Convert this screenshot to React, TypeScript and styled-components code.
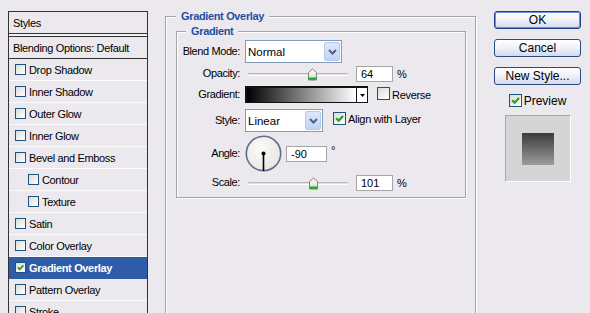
import * as React from 'react';
import styled, { createGlobalStyle } from 'styled-components';

const GlobalStyle = createGlobalStyle`
    html, body {
        margin: 0;
        padding: 0;
        background: #ebe9ee;
    }
    body {
        font-family: 'Liberation Sans', Arial, sans-serif;
        font-size: 11px;
        color: #000;
    }
`;

const Frame = styled.div`
    display: flex;
    align-items: flex-start;
    width: 590px;
    height: 313px;
    overflow: hidden;
    background: #ebe9ee;
`;

/* ---------- left styles list ---------- */

const StylesPanel = styled.div`
    flex-shrink: 0;
    width: 140px;
    height: 330px;
    margin: 11px 0 0 8px;
    box-sizing: border-box;
    border: 1px solid #333;
    border-bottom: none;
    letter-spacing: -0.35px;
`;

const PanelHeader = styled.div`
    height: 21px;
    display: flex;
    align-items: center;
    padding-left: 4px;
    border-bottom: 1px solid #333;
`;

const DoubleRule = styled.div`
    height: 2px;
    background: #f2f1f4;
    border-bottom: 1px solid #333;
`;

const BlendingRow = styled.div`
    height: 21px;
    display: flex;
    align-items: center;
    padding-left: 4px;
    border-bottom: 1px solid #333;
`;

const StyleRow = styled.div<{ $indent?: boolean; $active?: boolean }>`
    height: 21px;
    display: flex;
    align-items: center;
    gap: 3px;
    padding-left: ${(p) => (p.$indent ? 19 : 6)}px;
    border-bottom: 1px solid ${(p) => (p.$active ? '#2f5ca9' : '#fbfbfc')};
    background: ${(p) => (p.$active ? '#2f5ca9' : 'transparent')};
    color: ${(p) => (p.$active ? '#fff' : '#000')};
    font-weight: ${(p) => (p.$active ? 'bold' : 'normal')};
`;

/* ---------- checkbox ---------- */

const Box = styled.span<{ $size: number }>`
    position: relative;
    flex-shrink: 0;
    display: inline-block;
    width: ${(p) => p.$size}px;
    height: ${(p) => p.$size}px;
    box-sizing: border-box;
    border: 1px solid #1c5180;
    background: linear-gradient(135deg, #dcdcd6 0%, #f4f4f1 70%, #fff 100%);
    svg {
        position: absolute;
        left: 0;
        top: 0;
    }
`;

function Check({ size, checked }: { size: number; checked?: boolean }) {
    const s = size - 2;
    return (
        <Box $size={size}>
            {checked && (
                <svg width={s} height={s} viewBox="0 0 11 11">
                    <path d="M2.2 5.2 L4.6 7.7 L9 2.9" fill="none" stroke="#21a121" strokeWidth="2.2" />
                </svg>
            )}
        </Box>
    );
}

/* ---------- group boxes ---------- */

const MainGroup = styled.div`
    position: relative;
    flex-shrink: 0;
    width: 311px;
    height: 330px;
    margin: 16px 0 0 17px;
    box-sizing: border-box;
    border: 1px solid #a3a3a8;
    box-shadow: 1px 1px 0 #fff, inset 1px 1px 0 #fff;
    padding: 14px 0 0 10px;
`;

const InnerGroup = styled.div`
    position: relative;
    width: 290px;
    height: 167px;
    box-sizing: border-box;
    border: 1px solid #a3a3a8;
    box-shadow: 1px 1px 0 #fff, inset 1px 1px 0 #fff;
    padding-top: 8px;
`;

const Legend = styled.span<{ $left: number }>`
    position: absolute;
    top: -8px;
    left: ${(p) => p.$left}px;
    padding: 0 5px;
    background: #ebe9ee;
    color: #1f4f9e;
    font-weight: bold;
    letter-spacing: -0.35px;
    line-height: 14px;
`;

const Row = styled.div<{ $h: number; $mt: number }>`
    display: flex;
    align-items: center;
    height: ${(p) => p.$h}px;
    margin-top: ${(p) => p.$mt}px;
`;

const Label = styled.span`
    width: 63px;
    margin-right: 5px;
    text-align: right;
    letter-spacing: -0.4px;
    margin-top: -2px;
`;

const Text = styled.span<{ $ml?: number; $mt?: number }>`
    margin-left: ${(p) => p.$ml ?? 0}px;
    margin-top: ${(p) => p.$mt ?? 0}px;
    letter-spacing: -0.3px;
`;

/* ---------- combo box ---------- */

const Combo = styled.div<{ $w: number }>`
    display: flex;
    width: ${(p) => p.$w}px;
    height: 23px;
    box-sizing: border-box;
    border: 1px solid #7f9db9;
    background: #fff;
`;

const ComboText = styled.span`
    flex: 1;
    display: flex;
    align-items: center;
    padding-left: 2px;
    font-size: 11.5px;
`;

const ComboButton = styled.span`
    width: 16px;
    margin: 1px;
    box-sizing: border-box;
    border: 1px solid #b7c7ea;
    border-radius: 2px;
    background: linear-gradient(#dde7fb, #c3d3f7);
    display: flex;
    align-items: center;
    justify-content: center;
`;

function Select({ value, width }: { value: string; width: number }) {
    return (
        <Combo $w={width}>
            <ComboText>{value}</ComboText>
            <ComboButton>
                <svg width="9" height="6" viewBox="0 0 9 6">
                    <path d="M1 1 L4.5 4.5 L8 1" fill="none" stroke="#4d6185" strokeWidth="2" />
                </svg>
            </ComboButton>
        </Combo>
    );
}

/* ---------- slider ---------- */

const SliderWrap = styled.div`
    position: relative;
    width: 106px;
    height: 16px;
`;

const Track = styled.div`
    position: absolute;
    left: 3px;
    top: 7px;
    width: 100px;
    height: 3px;
    box-sizing: border-box;
    border-top: 1px solid #b9b9b4;
    border-bottom: 1px solid #fff;
    border-radius: 2px;
    background: #e2e2da;
`;

const Thumb = styled.svg`
    position: absolute;
    top: 2px;
    margin-left: -2px;
`;

function Slider({ pos }: { pos: number }) {
    return (
        <SliderWrap>
            <Track />
            <Thumb width="11" height="13" viewBox="0 0 11 13" style={{ left: 3 + pos * 100 - 3 }}>
                <defs>
                    <linearGradient id="thumbFill" x1="0" y1="0" x2="0" y2="1">
                        <stop offset="0" stopColor="#fff" />
                        <stop offset="1" stopColor="#d9d9d4" />
                    </linearGradient>
                </defs>
                <path d="M1.5 12 V4.5 L5.5 1 L9.5 4.5 V12 Z" fill="url(#thumbFill)" stroke="#80807c" />
                <rect x="1.5" y="9.5" width="8" height="2.5" fill="#24b024" />
            </Thumb>
        </SliderWrap>
    );
}

/* ---------- text field ---------- */

const Field = styled.span<{ $w: number; $ml: number }>`
    display: flex;
    align-items: center;
    width: ${(p) => p.$w}px;
    height: 16px;
    margin-left: ${(p) => p.$ml}px;
    box-sizing: border-box;
    border: 1px solid #a5a5a5;
    background: #fff;
    padding-left: 4px;
`;

/* ---------- gradient picker ---------- */

const GradientPicker = styled.div`
    display: flex;
    width: 123px;
    height: 17px;
    box-sizing: border-box;
    border: 1px solid #111;
    border-top-width: 2px;
    border-left-width: 2px;
    background: #fff;
`;

const GradientBar = styled.div`
    flex: 1;
    background: linear-gradient(to right, #000 0%, #fff 100%);
`;

const GradientArrow = styled.div`
    width: 10px;
    border-left: 1px solid #111;
    display: flex;
    align-items: center;
    justify-content: center;
`;

/* ---------- angle dial ---------- */

function Dial() {
    return (
        <svg width="37" height="37" viewBox="0 0 37 37">
            <defs>
                <radialGradient id="dialFill" cx="0.4" cy="0.35" r="0.7">
                    <stop offset="0" stopColor="#fbfbfa" />
                    <stop offset="1" stopColor="#e6e6e2" />
                </radialGradient>
            </defs>
            <circle cx="18.5" cy="18.5" r="17.2" fill="url(#dialFill)" stroke="#5d6e92" strokeWidth="1.6" />
            <line x1="18.5" y1="18.5" x2="18.5" y2="36" stroke="#000" strokeWidth="1.6" />
            <circle cx="18.5" cy="18.5" r="2" fill="#000" />
        </svg>
    );
}

/* ---------- right column ---------- */

const SideColumn = styled.div`
    flex-shrink: 0;
    width: 87px;
    margin: 11px 0 0 18px;
    display: flex;
    flex-direction: column;
    align-items: center;
`;

const Button = styled.button<{ $primary?: boolean }>`
    width: 87px;
    height: 18px;
    margin-bottom: 10px;
    padding: 0;
    box-sizing: border-box;
    border: 1px solid ${(p) => (p.$primary ? '#1c3f8a' : '#2a4a82')};
    border-radius: 3px;
    background: linear-gradient(#ffffff 0%, #f2f3f9 45%, #d3daee 100%);
    box-shadow: ${(p) => (p.$primary ? 'inset 0 0 0 1px #6a91e0' : 'none')};
    font-family: 'Liberation Sans', Arial, sans-serif;
    font-size: 12px;
    line-height: 15px;
    color: #000;
`;

const PreviewToggle = styled.div`
    display: flex;
    align-items: center;
    gap: 2px;
    height: 13px;
    margin-top: -1px;
    font-size: 12px;
`;

const PreviewBox = styled.div`
    width: 66px;
    height: 67px;
    margin-top: 8px;
    box-sizing: border-box;
    border: 1px solid #fff;
    border-top-color: #a9a9ac;
    border-left-color: #a9a9ac;
    background: #d5d5d6;
    display: flex;
    align-items: center;
    justify-content: center;
`;

const PreviewSwatch = styled.div`
    width: 32px;
    height: 32px;
    background: linear-gradient(#3b3b3b, #9c9c9c);
`;

const styleItems: { label: string; indent?: boolean; checked?: boolean }[] = [
    { label: 'Drop Shadow' },
    { label: 'Inner Shadow' },
    { label: 'Outer Glow' },
    { label: 'Inner Glow' },
    { label: 'Bevel and Emboss' },
    { label: 'Contour', indent: true },
    { label: 'Texture', indent: true },
    { label: 'Satin' },
    { label: 'Color Overlay' },
    { label: 'Gradient Overlay', checked: true },
    { label: 'Pattern Overlay' },
    { label: 'Stroke' },
];

export default function App(): JSX.Element {
    const opacity = 64;
    const scale = 101;

    return (
        <Frame>
            <GlobalStyle />
            <StylesPanel>
                <PanelHeader>Styles</PanelHeader>
                <DoubleRule />
                <BlendingRow>Blending Options: Default</BlendingRow>
                {styleItems.map((item) => (
                    <StyleRow key={item.label} $indent={item.indent} $active={item.checked}>
                        <Check size={11} checked={item.checked} />
                        {item.label}
                    </StyleRow>
                ))}
            </StylesPanel>

            <MainGroup>
                <Legend $left={10}>Gradient Overlay</Legend>
                <InnerGroup>
                    <Legend $left={9}>Gradient</Legend>
                    <Row $h={23} $mt={0}>
                        <Label>Blend Mode:</Label>
                        <Select value="Normal" width={97} />
                    </Row>
                    <Row $h={16} $mt={3}>
                        <Label>Opacity:</Label>
                        <Slider pos={opacity / 100} />
                        <Field $w={37} $ml={5}>{opacity}</Field>
                        <Text $ml={4}>%</Text>
                    </Row>
                    <Row $h={17} $mt={4}>
                        <Label>Gradient:</Label>
                        <GradientPicker>
                            <GradientBar />
                            <GradientArrow>
                                <svg width="5" height="3" viewBox="0 0 5 3">
                                    <path d="M0 0 H5 L2.5 3 Z" fill="#000" />
                                </svg>
                            </GradientArrow>
                        </GradientPicker>
                        <Text $ml={9}>
                            <Check size={13} />
                        </Text>
                        <Text $ml={2}>Reverse</Text>
                    </Row>
                    <Row $h={23} $mt={6}>
                        <Label>Style:</Label>
                        <Select value="Linear" width={78} />
                        <Text $ml={10} $mt={-3}>
                            <Check size={13} checked />
                        </Text>
                        <Text $ml={2} $mt={-3}>Align with Layer</Text>
                    </Row>
                    <Row $h={37} $mt={3}>
                        <Label>Angle:</Label>
                        <Dial />
                        <Field $w={41} $ml={4}>-90</Field>
                        <Text $ml={4} $mt={-8}>°</Text>
                    </Row>
                    <Row $h={16} $mt={3}>
                        <Label>Scale:</Label>
                        <Slider pos={(scale - 10) / 140} />
                        <Field $w={37} $ml={5}>{scale}</Field>
                        <Text $ml={4}>%</Text>
                    </Row>
                </InnerGroup>
            </MainGroup>

            <SideColumn>
                <Button $primary>OK</Button>
                <Button>Cancel</Button>
                <Button>New Style...</Button>
                <PreviewToggle>
                    <Check size={13} checked />
                    Preview
                </PreviewToggle>
                <PreviewBox>
                    <PreviewSwatch />
                </PreviewBox>
            </SideColumn>
        </Frame>
    );
}
